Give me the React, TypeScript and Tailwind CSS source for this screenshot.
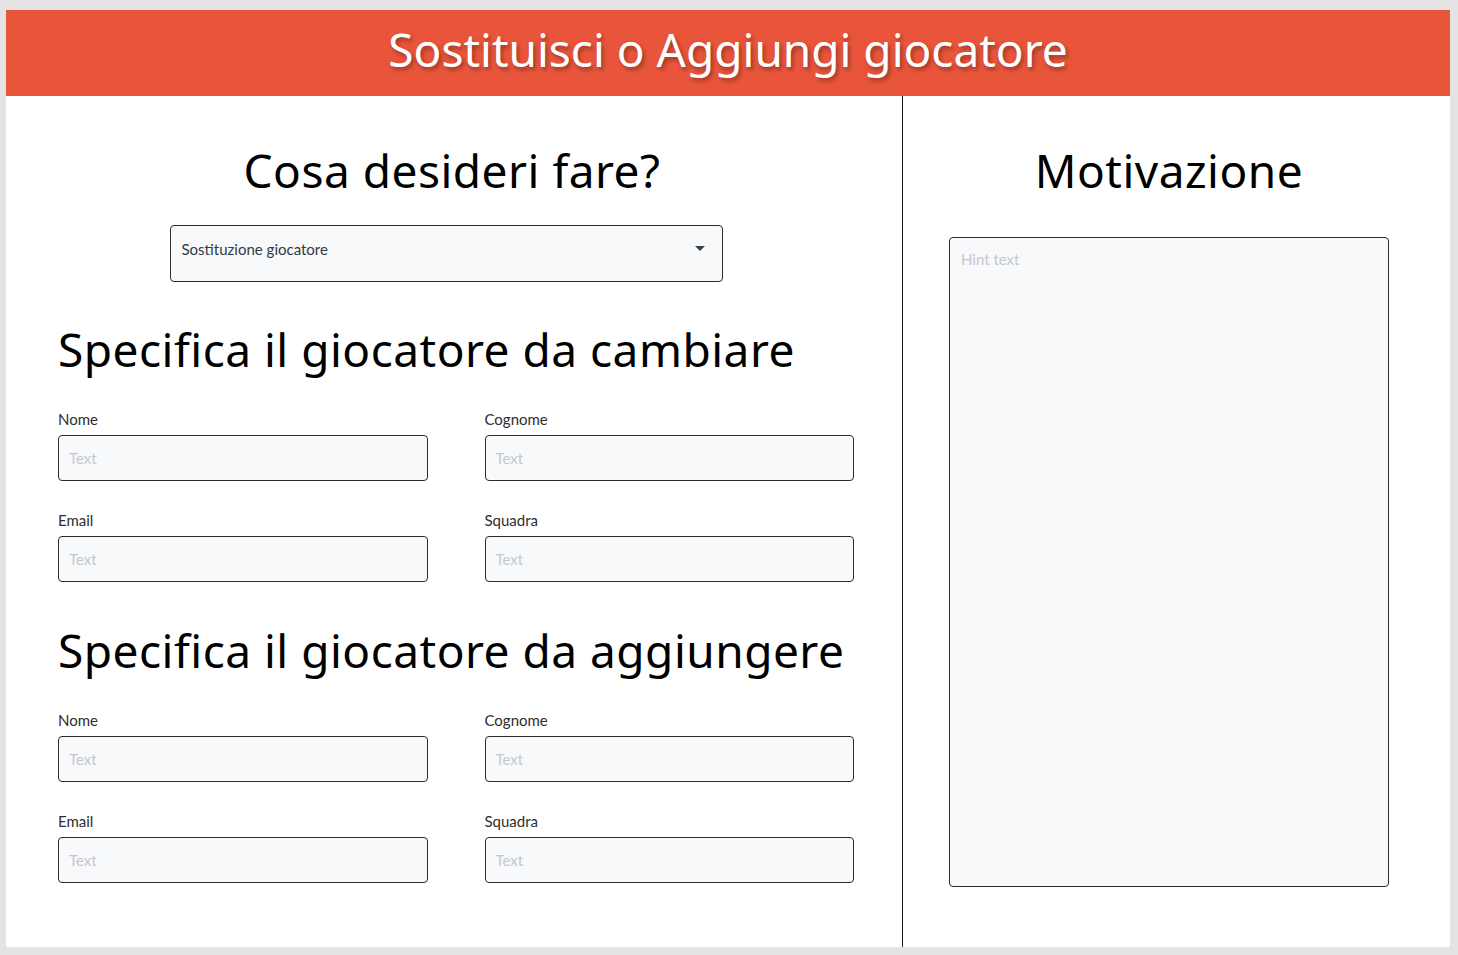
import React from 'react';

const headingFont = { fontFamily: '"Noto Sans", "DejaVu Sans", sans-serif' };

function Field({ label }: { label: string }) {
  return (
    <div className="flex flex-col">
      <label className="mb-[6px] text-[15px] leading-[20px] text-[#2e2e2e]">{label}</label>
      <input
        placeholder="Text"
        className="h-[46px] w-full rounded-[4px] border border-[#2b2b2b] bg-[#f8f9fb] px-[10px] text-[15px] placeholder:text-[#c4c6d2] outline-none"
      />
    </div>
  );
}

function PlayerSection({ title }: { title: string }) {
  return (
    <section>
      <h2 className="text-[46px] font-normal leading-[56px] tracking-[0.5px] text-black" style={headingFont}>
        {title}
      </h2>
      <div className="mt-[32px] grid grid-cols-2 gap-x-[57px] gap-y-[29px]">
        <Field label="Nome" />
        <Field label="Cognome" />
        <Field label="Email" />
        <Field label="Squadra" />
      </div>
    </section>
  );
}

export default function App() {
  return (
    <div
      className="min-h-[955px] bg-[#e4e4e4] pt-[10px] pb-[8px] pl-[6px] pr-[8px]"
      style={{ fontFamily: 'Lato, "Noto Sans", sans-serif' }}
    >
      <div className="flex h-[937px] flex-col bg-white">
        {/* Header */}
        <header className="flex h-[86px] shrink-0 items-center justify-center bg-[#e9553a] pb-[8px]">
          <h1
            className="text-[46px] font-normal tracking-[0px] text-white [text-shadow:2px_3px_4px_rgba(0,0,0,0.35)]"
            style={headingFont}
          >
            Sostituisci o Aggiungi giocatore
          </h1>
        </header>

        <div className="flex flex-1">
          {/* Left column */}
          <div className="w-[897px] border-r border-[#1a1a1a] pl-[52px] pr-[48px]">
            <div className="flex flex-col items-center">
              <h2 className="mt-[46px] mr-[8px] text-[46px] leading-[56px] tracking-[0.5px] text-black" style={headingFont}>
                Cosa desideri fare?
              </h2>
              <div className="mt-[27px] mr-[20px] flex h-[57px] w-[553px] items-start justify-between rounded-[4px] border border-[#2b2b2b] bg-[#f8f9fb] px-[11px] pt-[12px]">
                <span className="text-[15px] text-[#333a44]">Sostituzione giocatore</span>
                <svg width="10" height="6" viewBox="0 0 10 6" className="mt-[8px] mr-[6px]">
                  <path d="M0 0 L10 0 L5 5 Z" fill="#3a3f48" />
                </svg>
              </div>
            </div>

            <div className="mt-[39px]">
              <PlayerSection title="Specifica il giocatore da cambiare" />
            </div>
            <div className="mt-[40px]">
              <PlayerSection title="Specifica il giocatore da aggiungere" />
            </div>
          </div>

          {/* Right column */}
          <div className="flex flex-1 flex-col pl-[46px] pr-[61px]">
            <h2 className="mt-[46px] text-center text-[46px] leading-[56px] tracking-[0.5px] text-black" style={headingFont}>
              Motivazione
            </h2>
            <textarea
              placeholder="Hint text"
              className="mt-[39px] h-[650px] w-full resize-none rounded-[4px] border border-[#2b2b2b] bg-[#f8f9fb] px-[11px] py-[10px] text-[15px] placeholder:text-[#c4c6d2] outline-none"
            />
          </div>
        </div>
      </div>
    </div>
  );
}
